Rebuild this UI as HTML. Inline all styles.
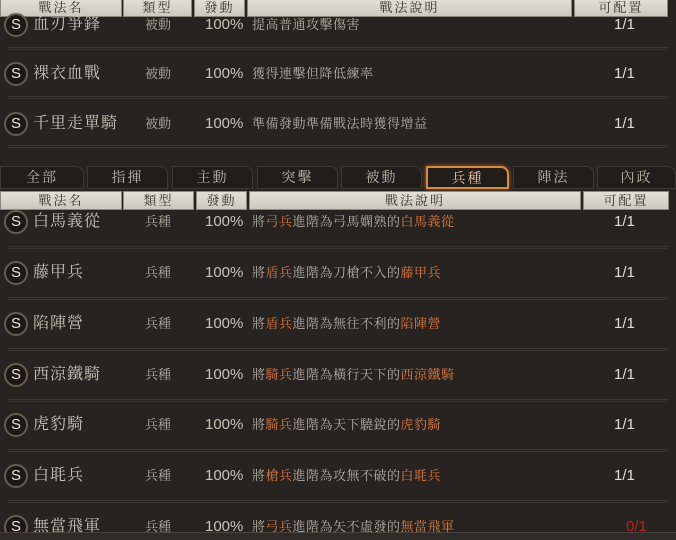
<!DOCTYPE html>
<html><head><meta charset="utf-8"><style>
*{margin:0;padding:0;box-sizing:border-box}
body{width:676px;height:540px;overflow:hidden;background:#262321;font-family:"Liberation Sans","Noto Serif CJK SC","Noto Sans CJK TC",sans-serif;color:#c9c3b8;position:relative}
.a{position:absolute}
.hd{position:absolute;height:19px;background:linear-gradient(#e3dfd7,#cdc8bf);border:1px solid #8c867c;color:#3a342d;font-size:13px;text-align:center;line-height:17px;letter-spacing:2px}
.sep{position:absolute;left:8px;width:660px;height:3px;border-top:1px solid #3b3531;border-bottom:1px solid #3a322c}
.r{position:absolute;left:0;width:676px;height:24px;line-height:24px}
.r>*{position:absolute;top:0;white-space:nowrap}
.s{left:4px;width:24px;height:24px;border-radius:50%;border:2px solid #6b5d4c;background:#1a1715;color:#e8e2d6;font-size:15px;text-align:center;line-height:20px}
.n{left:33px;font-size:16px;color:#c8c2b6;letter-spacing:1px}
.t{left:145px;font-size:13px;color:#b5afa4}
.p{left:205px;font-size:15px;color:#c9c3b7}
.d{left:252px;font-size:13px;color:#b5afa4;letter-spacing:0.5px}
.c{left:614px;font-size:15px;color:#e0dbd2}
.o{color:#e07a3a}
.tab{position:absolute;top:166px;height:23px;background:#211d1b;border:1px solid #3f3833;border-radius:0 8px 0 0;color:#bdb6aa;font-size:14px;text-align:center;line-height:21px;letter-spacing:2px}
</style></head><body>
<div class="hd" style="left:0;top:-2px;width:122px">戰法名</div>
<div class="hd" style="left:123px;top:-2px;width:69px">類型</div>
<div class="hd" style="left:194px;top:-2px;width:51px">發動</div>
<div class="hd" style="left:247px;top:-2px;width:325px">戰法說明</div>
<div class="hd" style="left:574px;top:-2px;width:94px">可配置</div>

<div class="r" style="top:13px"><div class="s">S</div><div class="n">血刃爭鋒</div><div class="t">被動</div><div class="p">100%</div><div class="d">提高普通攻擊傷害</div><div class="c">1/1</div></div>
<div class="sep" style="top:47px"></div>
<div class="r" style="top:62px"><div class="s">S</div><div class="n">裸衣血戰</div><div class="t">被動</div><div class="p">100%</div><div class="d">獲得連擊但降低練率</div><div class="c">1/1</div></div>
<div class="sep" style="top:96px"></div>
<div class="r" style="top:112px"><div class="s">S</div><div class="n">千里走單騎</div><div class="t">被動</div><div class="p">100%</div><div class="d">準備發動準備戰法時獲得增益</div><div class="c">1/1</div></div>
<div class="sep" style="top:145px"></div>

<div class="tab" style="left:0;width:84px">全部</div>
<div class="tab" style="left:87px;width:81px">指揮</div>
<div class="tab" style="left:172px;width:81px">主動</div>
<div class="tab" style="left:257px;width:81px">突擊</div>
<div class="tab" style="left:341px;width:81px">被動</div>
<div class="tab" style="left:426px;width:83px;border:2px solid #d98a3a;color:#e8c89a;box-shadow:0 0 4px #b0602a">兵種</div>
<div class="tab" style="left:513px;width:81px">陣法</div>
<div class="tab" style="left:597px;width:79px">內政</div>

<div class="hd" style="left:0;top:191px;width:122px">戰法名</div>
<div class="hd" style="left:123px;top:191px;width:71px">類型</div>
<div class="hd" style="left:196px;top:191px;width:51px">發動</div>
<div class="hd" style="left:249px;top:191px;width:332px">戰法說明</div>
<div class="hd" style="left:583px;top:191px;width:86px">可配置</div>

<div class="r" style="top:210px"><div class="s">S</div><div class="n">白馬義從</div><div class="t">兵種</div><div class="p">100%</div><div class="d">將<span class="o">弓兵</span>進階為弓馬嫻熟的<span class="o">白馬義從</span></div><div class="c">1/1</div></div>
<div class="sep" style="top:246px"></div>
<div class="r" style="top:261px"><div class="s">S</div><div class="n">藤甲兵</div><div class="t">兵種</div><div class="p">100%</div><div class="d">將<span class="o">盾兵</span>進階為刀槍不入的<span class="o">藤甲兵</span></div><div class="c">1/1</div></div>
<div class="sep" style="top:297px"></div>
<div class="r" style="top:312px"><div class="s">S</div><div class="n">陷陣營</div><div class="t">兵種</div><div class="p">100%</div><div class="d">將<span class="o">盾兵</span>進階為無往不利的<span class="o">陷陣營</span></div><div class="c">1/1</div></div>
<div class="sep" style="top:348px"></div>
<div class="r" style="top:363px"><div class="s">S</div><div class="n">西涼鐵騎</div><div class="t">兵種</div><div class="p">100%</div><div class="d">將<span class="o">騎兵</span>進階為橫行天下的<span class="o">西涼鐵騎</span></div><div class="c">1/1</div></div>
<div class="sep" style="top:399px"></div>
<div class="r" style="top:413px"><div class="s">S</div><div class="n">虎豹騎</div><div class="t">兵種</div><div class="p">100%</div><div class="d">將<span class="o">騎兵</span>進階為天下驍銳的<span class="o">虎豹騎</span></div><div class="c">1/1</div></div>
<div class="sep" style="top:449px"></div>
<div class="r" style="top:464px"><div class="s">S</div><div class="n">白毦兵</div><div class="t">兵種</div><div class="p">100%</div><div class="d">將<span class="o">槍兵</span>進階為攻無不破的<span class="o">白毦兵</span></div><div class="c">1/1</div></div>
<div class="sep" style="top:500px"></div>
<div class="r" style="top:515px"><div class="s">S</div><div class="n">無當飛軍</div><div class="t">兵種</div><div class="p">100%</div><div class="d">將<span class="o">弓兵</span>進階為矢不虛發的<span class="o">無當飛軍</span></div><div class="c" style="color:#c0201a;left:626px">0/1</div></div>
<div class="a" style="left:0;top:532px;width:676px;height:8px;background:#2e2b29;border-top:1px solid #4a4540"></div>
</body></html>
